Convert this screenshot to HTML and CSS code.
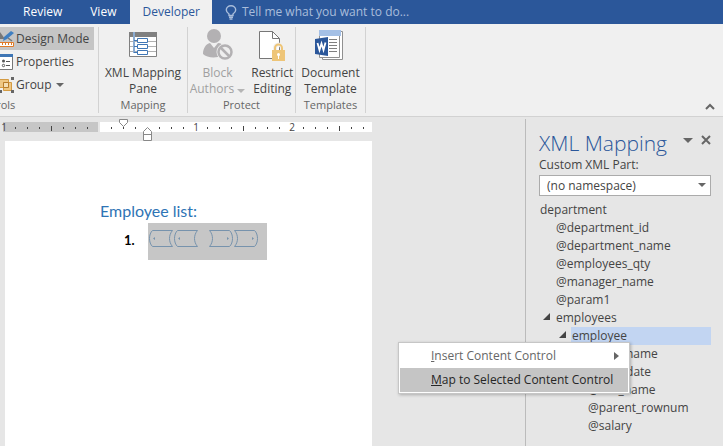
FILE: index.html
```
<!DOCTYPE html>
<html lang="en">
<head>
<meta charset="UTF-8" />
<meta name="viewport" content="width=device-width, initial-scale=1" />
<title>XML Mapping</title>
<link rel="stylesheet" href="styles.css">
</head>
<body>

<div class="app">
  <nav class="tabs">
    <button class="tab">Review</button>
    <button class="tab">View</button>
    <button class="tab active">Developer</button>
    <button class="tell-me">
      <svg width="12" height="15" viewBox="0 0 12 15" fill="none" stroke="#a9bddb" stroke-width="1.4">
        <path d="M4 10.5V9C2.500 8 1.300 6.800 1.300 5a4.700 4.300 0 0 1 9.400 0c0 1.800-1.200 3-2.700 4v1.500zM4 12.300h4M4.500 14h3" />
      </svg>
      Tell me what you want to do...
    </button>
  </nav>

  <div class="ribbon">
    <section class="group controls">
      <div class="rows">
        <button class="row pressed">
          <svg width="14" height="18" viewBox="0 0 14 18">
            <path d="M0 2v7h5z" fill="#777" />
            <path d="M3 11l1-4 7-6 3 2-7 6z" fill="#3f7fc1" />
            <path d="M8 8l4 3" stroke="#777" stroke-width="1.500" />
            <path d="M-1 12.500h14.500v4H-1z" fill="#fff" stroke="#e07b28" />
            <path d="M2.500 13v2M5.500 13v2M8.500 13v2M11.500 13v2" stroke="#e07b28" />
          </svg>
          Design Mode
        </button>
        <button class="row">
          <svg width="14" height="18" viewBox="0 0 14 18">
            <path d="M-1 1.500h13.500v15H-1z" fill="#fff" stroke="#777" />
            <path d="M0 1h13v3H0z" fill="#3f76b5" />
            <circle cx="3.500" cy="8" r="1.500" fill="#555" />
            <circle cx="3.500" cy="12.500" r="1.200" fill="none" stroke="#555" />
            <path d="M6 8.500h4M6 12.500h4" stroke="#555" />
          </svg>
          Properties
        </button>
        <button class="row">
          <svg width="14" height="18" viewBox="0 0 14 18">
            <path d="M-1 3.500h9.500v8H-1zM3.500 6.500h8v8h-8z" fill="#efc783" stroke="#d49b42" />
            <path d="M3.500 6.500h5v5h-5z" fill="#f5dfb5" stroke="#b97d2b" />
            <path d="M11 1h3v3h-3zM11 14h3v3h-3zM0 14h2v3H0z" fill="#666" />
          </svg>
          Group
          <span class="caret"></span>
        </button>
      </div>
      <h2>Controls</h2>
    </section>

    <section class="group mapping">
      <div class="tools">
        <button class="tool">
          <svg width="32" height="32" viewBox="0 0 32 32">
            <path d="M2.500 3.500h27v24h-27z" fill="#fff" stroke="#808080" />
            <path d="M2 3h28v5H2z" fill="#808080" />
            <path d="M3 12.500h26M3 17.500h26M3 22.500h26" stroke="#b0b0b0" />
            <path d="M6 3h2v22H6z" fill="#fff" />
            <path d="M7 3v20.500h4M7 11.500h4M7 17.500h4" fill="none" stroke="#3f76b5" stroke-width="1.200" />
            <path d="M10.500 9.500h10v4h-10zM10.500 15.500h10v4h-10zM10.500 21.500h10v4h-10z" fill="#fff" stroke="#3f76b5" />
          </svg>
          <span>XML Mapping<br>Pane</span>
        </button>
      </div>
      <h2>Mapping</h2>
    </section>

    <section class="group protect">
      <div class="tools">
        <button class="tool" disabled>
          <svg width="32" height="32" viewBox="0 0 32 32">
            <circle cx="13" cy="7" r="7" fill="#b3b1b3" />
            <path d="M2 25c0-6 3-10 7-11l4 5 4-5c3 0 5 2 6 4l-6 10C11 29 5 28 2 25z" fill="#b3b1b3" />
            <circle cx="24" cy="23" r="8.500" fill="#f0f0f0" />
            <circle cx="24" cy="23" r="6.500" fill="#eee" stroke="#b3b1b3" stroke-width="2.500" />
            <path d="M19.500 18.500l9 9" stroke="#b3b1b3" stroke-width="2.500" />
          </svg>
          <span>Block<br>Authors <i class="caret"></i></span>
        </button>
        <button class="tool">
          <svg width="32" height="32" viewBox="0 0 32 32">
            <path d="M3.500 2.500h13l7 7v20h-20z" fill="#fff" stroke="#777" />
            <path d="M16.500 2.500v7h7" fill="none" stroke="#777" />
            <path d="M19 22v-3a3.500 3.500 0 0 1 7 0v3" fill="none" stroke="#f0f0f0" stroke-width="4" />
            <path d="M19 22v-3a3.500 3.500 0 0 1 7 0v3" fill="none" stroke="#eec578" stroke-width="2" />
            <path d="M16 21h13v11H16z" fill="#eec578" />
            <circle cx="22.500" cy="25.500" r="1.500" fill="#fff" />
            <path d="M22 26h1v4h-1z" fill="#fff" />
          </svg>
          <span>Restrict<br>Editing</span>
        </button>
      </div>
      <h2>Protect</h2>
    </section>

    <section class="group templates">
      <div class="tools">
        <button class="tool">
          <svg width="32" height="32" viewBox="0 0 32 32">
            <path d="M7.500 2.500h20v28h-20z" fill="#fff" stroke="#909090" />
            <path d="M4.500 1.500h20v27h-20z" fill="#fff" stroke="#909090" />
            <path d="M4 1h22v6H4z" fill="#a4c0e6" />
            <path d="M14 10.500h8M14 13.500h8M14 16.500h8M14 19.500h8M14 22.500h8" stroke="#808080" />
            <path d="M0 10l13-2v19L0 25z" fill="#2b579a" />
            <path d="M2.500 14l2 7 2-6.500 2 6.500 2-7.500" fill="none" stroke="#fff" stroke-width="1.800" />
          </svg>
          <span>Document<br>Template</span>
        </button>
      </div>
      <h2>Templates</h2>
    </section>

    <button class="collapse" aria-label="Collapse the ribbon">
      <svg width="10" height="7" viewBox="0 0 10 7" fill="none" stroke="#666" stroke-width="2"><path d="M1 6l4-4 4 4" /></svg>
    </button>
  </div>

  <div class="workspace">
    <main class="canvas">
      <div class="ruler">
        <svg width="372" height="24" viewBox="0 0 372 24">
          <path d="M3 5h95v10H3z" fill="#c6c6c6" />
          <path d="M15.500 10v2M27.500 10v2M39.500 10v2M63.500 10v2M75.500 10v2M87.500 10v2M111.500 10v2M123.500 10v2M135.500 10v2M159.500 10v2M171.500 10v2M183.500 10v2M207.500 10v2M219.500 10v2M231.500 10v2M255.500 10v2M267.500 10v2M279.500 10v2M303.500 10v2M315.500 10v2M327.500 10v2M351.500 10v2M363.500 10v2" stroke="#444" />
          <path d="M51.500 9v5M243.500 9v5M339.500 9v5" stroke="#444" />
          <text x="4" y="14">1</text>
          <text x="196" y="14">1</text>
          <text x="292" y="14">2</text>
          <path d="M119.500 2.500h8v3l-4 4-4-4z" fill="#fff" stroke="#888" />
          <path d="M143.500 23.500v-9l4-4 4 4v9zM143.500 17.500h8" fill="#fff" stroke="#888" />
        </svg>
      </div>
      <article class="page">
        <h1>Employee list:</h1>
        <ol>
          <li>
            <span class="field">
              <svg width="112" height="18" viewBox="0 0 112 18" fill="none" stroke="#7793ad">
                <path d="M24.500 .5H4.500C.5 4 .5 13 4.500 16.500h20C20.500 12 20.500 5 24.500 .5z" />
                <path d="M49.500 .5h-20c-4 3.500-4 12.500 0 16h20c-4-4.500-4-11.500 0-16z" />
                <path d="M61.500 .5h20c4 3.500 4 12.500 0 16h-20c4-4.500 4-11.500 0-16z" />
                <path d="M86.500 .5h20c4 3.500 4 12.500 0 16h-20c4-4.500 4-11.500 0-16z" />
                <path d="M7 7v3L5 8.500zM32 7v3l-2-1.500zM79 7v3l2-1.500zM104 7v3l2-1.500z" fill="#7793ad" stroke="none" />
              </svg>
            </span>
          </li>
        </ol>
      </article>
    </main>

    <aside class="pane">
      <header>
        <h2>XML Mapping</h2>
        <button aria-label="Pane options"><span class="caret large"></span></button>
        <button aria-label="Close">
          <svg width="10" height="10" viewBox="0 0 10 10" stroke="#666" stroke-width="2"><path d="M1 1l8 8M9 1L1 9" /></svg>
        </button>
      </header>
      <label for="part">Custom XML Part:</label>
      <div class="select">
        <select id="part">
          <option>(no namespace)</option>
        </select>
        <span class="caret"></span>
      </div>
      <ul class="tree">
        <li><span>department</span>
          <ul>
            <li><span>@department_id</span></li>
            <li><span>@department_name</span></li>
            <li><span>@employees_qty</span></li>
            <li><span>@manager_name</span></li>
            <li><span>@param1</span></li>
            <li class="open"><span>employees</span>
              <ul>
                <li class="open"><span class="selected">employee</span>
                  <ul>
                    <li><span>@first_name</span></li>
                    <li><span>@hire_date</span></li>
                    <li><span>@last_name</span></li>
                    <li><span>@parent_rownum</span></li>
                    <li><span>@salary</span></li>
                  </ul>
                </li>
              </ul>
            </li>
          </ul>
        </li>
      </ul>
    </aside>
  </div>

  <div class="menu" role="menu">
    <button role="menuitem"><span><u>I</u>nsert Content Control</span>
      <svg width="5" height="8" viewBox="0 0 5 8"><path d="M0 0l5 4-5 4z" fill="#666" /></svg>
    </button>
    <button role="menuitem" class="current"><span><u>M</u>ap to Selected Content Control</span></button>
  </div>
</div>

</body>
</html>
```
FILE: styles.css
```
* {
  box-sizing: border-box;
}
body {
  margin: 0;
  background: #e6e6e6;
  color: #444;
  font: 12px/16px "Open Sans", "Noto Sans", sans-serif;
}
h1, h2, ul, ol {
  margin: 0;
  padding: 0;
  font-weight: 400;
}
ul, ol {
  list-style: none;
}
button {
  padding: 0;
  border: none;
  background: none;
  color: inherit;
  font: inherit;
}
svg {
  display: block;
  flex: none;
}
.app {
  position: relative;
  display: flex;
  flex-direction: column;
  min-height: 100vh;
  overflow: hidden;
}
.caret {
  display: inline-block;
  border: 4px solid transparent;
  border-top-color: #666;
  border-bottom: none;
}
.caret.large {
  border-width: 5px;
  border-bottom: none;
}

/* tabs */
.tabs {
  display: flex;
  height: 24px;
  padding-left: 9px;
  background: #2b579a;
  color: #fff;
}
.tab {
  padding: 0 14px;
}
.tab.active {
  padding: 0 12px;
  background: #f0f0f0;
  color: #2b579a;
}
.tell-me {
  display: flex;
  align-items: center;
  gap: 5px;
  padding-left: 13px;
  color: #a9bddb;
}

/* ribbon */
.ribbon {
  display: flex;
  height: 93px;
  padding: 3px 0;
  background: #f0f0f0;
  border-bottom: 1px solid #d2d2d2;
}
.group {
  display: flex;
  flex-direction: column;
  justify-content: space-between;
  border-right: 1px solid #d2d2d2;
}
.group h2 {
  font-size: 11px;
  text-align: center;
  color: #666;
}
.controls {
  width: 99px;
  padding-right: 4px;
}
.controls h2 {
  margin-left: -28px;
  text-align: left;
}
.row {
  display: flex;
  align-items: center;
  gap: 2px;
  width: 100%;
  height: 23px;
}
.row .caret {
  margin-left: 2px;
}
.row.pressed {
  background: #c5c5c5;
}
.tools {
  display: flex;
  justify-content: center;
  gap: 6px;
  padding-top: 2px;
}
.tool {
  display: flex;
  flex-direction: column;
  align-items: center;
  gap: 4px;
  white-space: nowrap;
}
.tool:disabled {
  color: #a0a0a0;
}
.tool:disabled .caret {
  border-top-color: #b5b5b5;
}
.mapping {
  width: 89px;
}
.protect {
  width: 108px;
}
.templates {
  width: 70px;
}
.collapse {
  align-self: flex-end;
  margin-left: auto;
  padding: 0 8px 3px 0;
}

/* document */
.workspace {
  display: flex;
  flex: 1;
}
.canvas {
  display: flex;
  flex: 1;
  flex-direction: column;
}
.ruler {
  height: 24px;
  margin-right: 153px;
  background: linear-gradient(#fff, #fff) 100px 5px / 100% 10px no-repeat;
}
.ruler text {
  fill: #444;
  font-size: 10px;
  text-anchor: middle;
}
.page {
  flex: 1;
  margin: 0 153px 0 5px;
  padding: 58px 95px;
  background: #fff;
}
.page h1 {
  color: #2e74b5;
  font: 16px/24px Lato, sans-serif;
}
.page li {
  display: flex;
  gap: 13px;
  padding-left: 24px;
  color: #000;
  font: bold 13px/34px Lato, sans-serif;
}
.page li::before {
  content: "1.";
}
.field {
  height: 37px;
  padding: 7px 7px 0 0;
  background: #c6c6c6;
}

/* task pane */
.pane {
  width: 198px;
  margin-top: 2px;
  padding: 11px 12px 0 13px;
  border-left: 1px solid #bbb;
}
.pane header {
  display: flex;
  align-items: flex-start;
  gap: 8px;
}
.pane header h2 {
  flex: 1;
  color: #2b579a;
  font-size: 21px;
  font-weight: 300;
  line-height: 27px;
  white-space: nowrap;
}
.pane header button {
  display: flex;
  align-items: center;
  height: 20px;
}
.pane label {
  display: block;
}
.select {
  position: relative;
  margin-top: 2px;
}
.select select {
  width: 100%;
  height: 21px;
  padding: 0 7px;
  appearance: none;
  background: #fff;
  border: 1px solid #ababab;
  border-radius: 0;
  color: #444;
  font: inherit;
}
.select .caret {
  position: absolute;
  top: 8px;
  right: 5px;
}
.tree {
  margin-top: 5px;
  line-height: 18px;
}
.tree ul {
  padding-left: 16px;
}
.tree span {
  display: block;
  padding-left: 1px;
}
.tree .selected {
  background: #c2d5f2;
}
.tree .open {
  position: relative;
}
.tree .open::before {
  content: "";
  position: absolute;
  top: 4px;
  left: -12px;
  border-left: 7px solid transparent;
  border-bottom: 7px solid #444;
}

/* context menu */
.menu {
  position: absolute;
  top: 342px;
  right: 93px;
  width: 232px;
  padding: 1px;
  background: #fff;
  border: 1px solid #c6c6c6;
  box-shadow: 1px 1px 3px rgba(0,0,0,0.25);
}
.menu button {
  display: flex;
  align-items: center;
  justify-content: space-between;
  width: 100%;
  height: 24px;
  padding: 0 9px 0 31px;
  color: #666;
  white-space: nowrap;
}
.menu .current {
  background: #c5c5c5;
  color: #262626;
}
```
